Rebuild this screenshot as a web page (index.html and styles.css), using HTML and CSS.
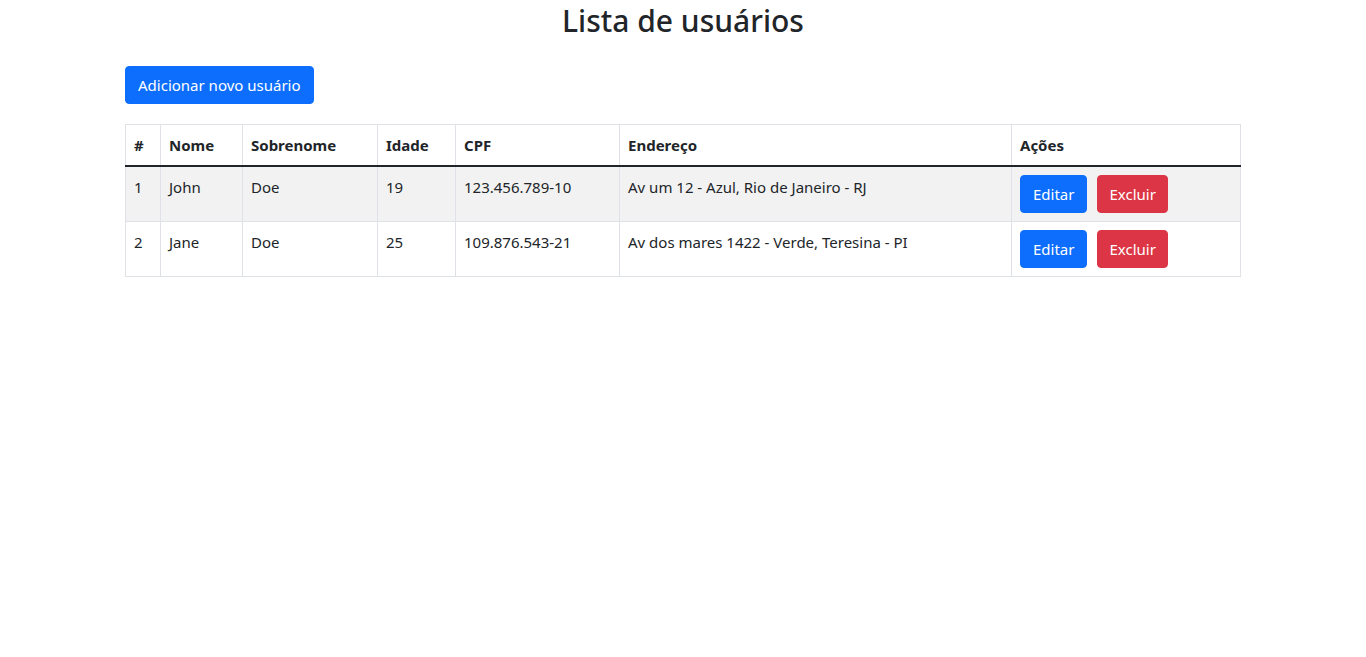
FILE: index.html
```html
<!DOCTYPE html>
<html lang="pt-BR">
<head>
<meta charset="utf-8">
<title>Lista de usuários</title>
<link rel="stylesheet" href="styles.css">
</head>
<body>
<div class="container">
  <h2 class="title">Lista de usuários</h2>
  <button class="btn btn-primary add-btn">Adicionar novo usuário</button>
  <table class="table">
    <colgroup>
      <col class="c-id"><col class="c-nome"><col class="c-sob"><col class="c-idade"><col class="c-cpf"><col class="c-end"><col class="c-acoes">
    </colgroup>
    <thead>
      <tr><th>#</th><th>Nome</th><th>Sobrenome</th><th>Idade</th><th>CPF</th><th>Endereço</th><th>Ações</th></tr>
    </thead>
    <tbody>
      <tr class="odd">
        <td>1</td><td>John</td><td>Doe</td><td>19</td><td>123.456.789-10</td><td>Av um 12 - Azul, Rio de Janeiro - RJ</td>
        <td><div class="actions"><button class="btn btn-primary">Editar</button><button class="btn btn-danger">Excluir</button></div></td>
      </tr>
      <tr>
        <td>2</td><td>Jane</td><td>Doe</td><td>25</td><td>109.876.543-21</td><td>Av dos mares 1422 - Verde, Teresina - PI</td>
        <td><div class="actions"><button class="btn btn-primary">Editar</button><button class="btn btn-danger">Excluir</button></div></td>
      </tr>
    </tbody>
  </table>
</div>
</body>
</html>
```
FILE: styles.css
```css
* { box-sizing: border-box; }
body {
  margin: 0;
  font-family: "Noto Sans", "Open Sans", sans-serif;
  font-size: 16px;
  line-height: 1.5;
  color: #212529;
  background: #fff;
}
.container {
  width: 1140px;
  margin: 0 auto;
  padding: 0 12px;
}
.title {
  margin: 0 0 26px;
  padding-top: 2px;
  text-align: center;
  font-size: 30px;
  font-weight: 500;
  line-height: 38px;
}
.btn {
  display: inline-block;
  border: 1px solid transparent;
  border-radius: 4px;
  padding: 6px 12px;
  font-family: inherit;
  font-size: 15px;
  line-height: 24px;
  color: #fff;
  cursor: pointer;
}
.btn-primary { background: #0d6efd; border-color: #0d6efd; }
.btn-danger { background: #dc3545; border-color: #dc3545; padding: 6px 11px; }
.add-btn { margin-bottom: 20px; }
.table {
  width: 100%;
  border-collapse: collapse;
  table-layout: fixed;
  border: 1px solid #dee2e6;
  font-size: 15px;
}
.c-id { width: 35px; }
.c-nome { width: 82px; }
.c-sob { width: 135px; }
.c-idade { width: 78px; }
.c-cpf { width: 164px; }
.c-end { width: 392px; }
.c-acoes { width: auto; }
.table th, .table td {
  border: 1px solid #dee2e6;
  padding: 8px;
  text-align: left;
  vertical-align: top;
  line-height: 24px;
}
.table th { font-weight: 700; }
.table thead th { border-bottom: 2px solid #212529; }
.table tbody tr.odd td { background: #f2f2f2; }
.actions { display: flex; gap: 10px; }
```
